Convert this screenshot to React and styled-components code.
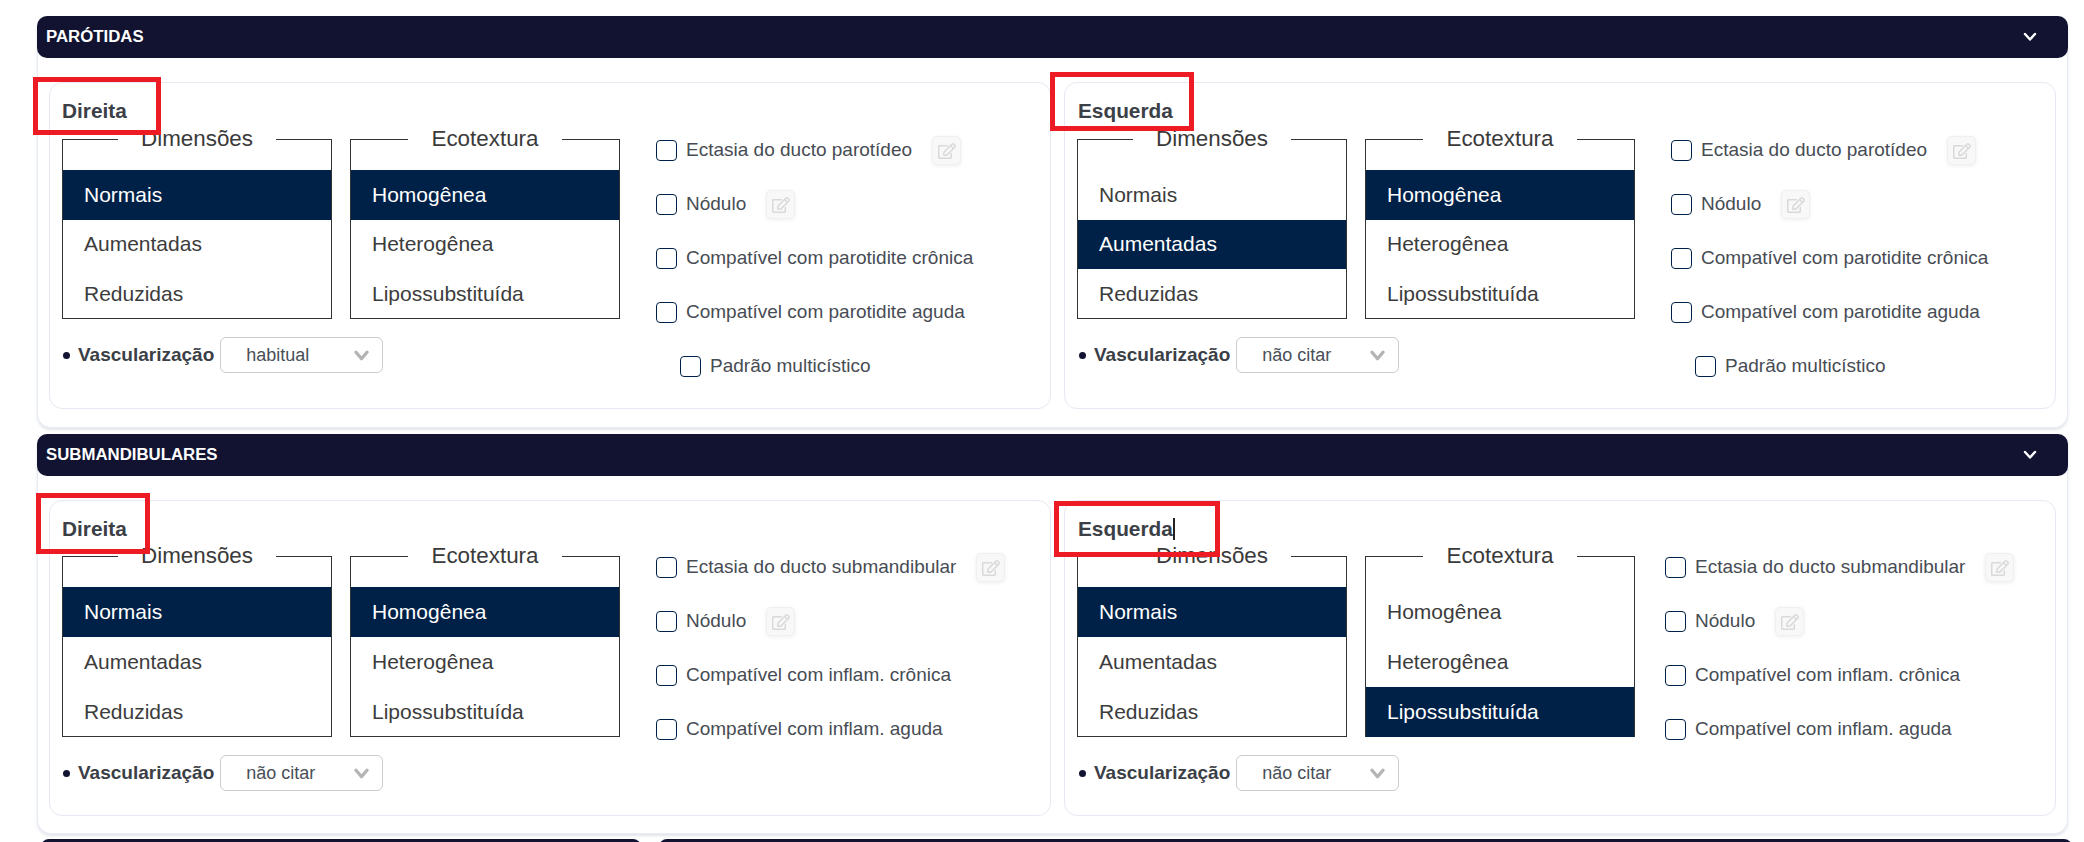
import React from 'react';
import styled, { createGlobalStyle } from 'styled-components';
import { FaRegEdit } from 'react-icons/fa';

const GlobalStyle = createGlobalStyle`
  html, body {
    margin: 0;
    background: #fff;
    overflow: hidden;
  }
  * {
    box-sizing: border-box;
  }
`;

const Page = styled.div`
  position: relative;
  width: 2084px;
  height: 842px;
  overflow: hidden;
  padding: 16px 16px 0 37px;
  font-family: "Liberation Sans", Arial, sans-serif;
`;

// bloco com cabecalho escuro
const Section = styled.section`
  margin-bottom: ${props => props.$after}px;
  background: #fff;
  border: 1px solid #e9ecf4;
  border-top: 0;
  border-radius: 10px 10px 14px 14px;
  box-shadow: 0 2px 3px rgba(120, 130, 160, 0.22);
`;

const SectionHeader = styled.div`
  display: flex;
  align-items: center;
  justify-content: space-between;
  height: 42px;
  margin: 0 -1px;
  padding: 0 31px 0 9px;
  background: #111331;
  border-radius: 10px;
  color: #fff;
  font-size: 16.8px;
  font-weight: 700;
`;

const Chevron = styled.svg`
  display: block;
  width: 14px;
  height: 10px;
  fill: none;
  stroke: ${props => props.$color || '#fff'};
  stroke-width: ${props => props.$weight || 2.4};
  stroke-linecap: round;
  stroke-linejoin: round;
`;

const SectionBody = styled.div`
  display: grid;
  grid-template-columns: 1002fr 992fr;
  gap: 13px;
  padding: 24px 11px ${props => props.$bottom}px 11px;
`;

const Panel = styled.div`
  padding: 16px 12px ${props => (props.$dense ? 24 : 25)}px;
  background: #fff;
  border: 1px solid #e6e9f1;
  border-radius: 13px;
`;

const PanelTitle = styled.div`
  height: ${props => (props.$dense ? 26 : 27)}px;
  margin-left: ${props => props.$shift}px;
  line-height: 23px;
  font-size: 20.8px;
  font-weight: 700;
  color: #3b4047;
`;

const Caret = styled.span`
  display: inline-block;
  width: 2px;
  height: 22px;
  margin-right: -2px;
  background: #222;
  vertical-align: -4px;
`;

const PanelContent = styled.div`
  display: flex;
  align-items: flex-start;
`;

const LeftColumn = styled.div`
  flex: none;
  width: 558px;
`;

const ListBoxes = styled.div`
  display: grid;
  grid-template-columns: 270px 270px;
  gap: 18px;
`;

const ListBox = styled.fieldset`
  margin: 0;
  padding: 18px 0 0;
  height: ${props => (props.$dense ? 194 : 193)}px;
  min-width: 0;
  border: 1px solid #333;
  border-radius: 0;
`;

const ListTitle = styled.legend`
  margin: 0 auto;
  padding: 0 23px;
  line-height: 26px;
  font-size: 22.4px;
  color: #3a3a3a;
`;

const ListOption = styled.div`
  display: flex;
  align-items: center;
  height: ${props => (props.$dense ? 50 : 49.5)}px;
  padding-left: 21px;
  font-size: 21px;
  background: ${props => (props.$selected ? '#002147' : 'transparent')};
  color: ${props => (props.$selected ? '#fff' : '#3c3c3c')};
`;

const VascRow = styled.div`
  display: flex;
  align-items: center;
  margin-top: 18px;
  margin-left: ${props => props.$shift}px;
`;

const Bullet = styled.span`
  flex: none;
  width: 7px;
  height: 7px;
  margin: 0 8px 0 1px;
  border-radius: 50%;
  background: #111331;
`;

const VascLabel = styled.span`
  font-size: 19px;
  font-weight: 700;
  color: #3b4047;
  margin-right: 6px;
`;

const SelectBox = styled.div`
  display: flex;
  align-items: center;
  justify-content: space-between;
  width: 163px;
  height: 36px;
  padding: 0 12px 0 25px;
  background: #fff;
  border: 1px solid #ccc;
  border-radius: 6px;
  font-size: 18px;
  color: #495057;
`;

const CheckList = styled.div`
  flex: none;
  display: flex;
  flex-direction: column;
  gap: 25px;
  margin-left: ${props => props.$offset || 36}px;
  padding: 10px 0 2px;
`;

const CheckRow = styled.label`
  display: flex;
  align-items: center;
  height: 29px;
  margin-left: ${props => (props.$nested ? 24 : 0)}px;
`;

const CheckBox = styled.span`
  flex: none;
  width: 21px;
  height: 21px;
  margin-right: 9px;
  background: #fff;
  border: 1.4px solid #002147;
  border-radius: 4px;
`;

const CheckText = styled.span`
  font-size: 19px;
  line-height: 24px;
  margin-top: -2px;
  color: #474c54;
  white-space: nowrap;
`;

const EditButton = styled.span`
  flex: none;
  display: flex;
  align-items: center;
  justify-content: center;
  width: 29px;
  height: 29px;
  margin-left: 20px;
  background: #f8f8f8;
  border: 1px solid #f0f0f0;
  border-radius: 5px;
  box-shadow: 0 1px 4px rgba(0, 0, 0, 0.07);
  color: #d9d9d9;
  font-size: 18px;
`;

const BottomBars = styled.div`
  display: grid;
  grid-template-columns: 600px 1fr;
  gap: 18px;
  margin: 0 -4px 0 4px;
`;

const BottomBar = styled.div`
  height: 42px;
  background: #111331;
  border-radius: 8px;
`;

// marcacoes vermelhas por cima do print
const RedMark = styled.div`
  position: absolute;
  left: ${props => props.$x}px;
  top: ${props => props.$y}px;
  width: ${props => props.$w}px;
  height: ${props => props.$h}px;
  border: 5px solid #ed1c24;
  pointer-events: none;
`;

const Check = ({ label, nested, edit }) => (
  <CheckRow $nested={nested}>
    <CheckBox />
    <CheckText>{label}</CheckText>
    {edit && (
      <EditButton>
        <FaRegEdit />
      </EditButton>
    )}
  </CheckRow>
);

const List = ({ title, options, selected, dense }) => (
  <ListBox $dense={dense}>
    <ListTitle>{title}</ListTitle>
    {options.map(option => (
      <ListOption key={option} $dense={dense} $selected={option === selected}>
        {option}
      </ListOption>
    ))}
  </ListBox>
);

const Side = ({ title, caret, dimension, texture, vascular, checks, offset, shift = 0, dense }) => (
  <Panel $dense={dense}>
    <PanelTitle $dense={dense} $shift={shift}>
      {title}
      {caret && <Caret />}
    </PanelTitle>
    <PanelContent>
      <LeftColumn>
        <ListBoxes>
          <List title="Dimensões" options={['Normais', 'Aumentadas', 'Reduzidas']} selected={dimension} dense={dense} />
          <List title="Ecotextura" options={['Homogênea', 'Heterogênea', 'Lipossubstituída']} selected={texture} dense={dense} />
        </ListBoxes>
        <VascRow $shift={shift}>
          <Bullet />
          <VascLabel>Vascularização</VascLabel>
          <SelectBox>
            {vascular}
            <Chevron viewBox="0 0 14 10" $color="#b4b4b4" $weight={3} style={{ width: 17, height: 11 }}>
              <polyline points="2,2 7,8 12,2" />
            </Chevron>
          </SelectBox>
        </VascRow>
      </LeftColumn>
      <CheckList $offset={offset}>
        {checks.map(check => (
          <Check key={check.label} {...check} />
        ))}
      </CheckList>
    </PanelContent>
  </Panel>
);

const parotidChecks = [
  { label: 'Ectasia do ducto parotídeo', edit: true },
  { label: 'Nódulo', edit: true },
  { label: 'Compatível com parotidite crônica' },
  { label: 'Compatível com parotidite aguda' },
  { label: 'Padrão multicístico', nested: true },
];

const submandibularChecks = [
  { label: 'Ectasia do ducto submandibular', edit: true },
  { label: 'Nódulo', edit: true },
  { label: 'Compatível com inflam. crônica' },
  { label: 'Compatível com inflam. aguda' },
];

const Block = ({ title, after, bottom, children }) => (
  <Section $after={after}>
    <SectionHeader>
      {title}
      <Chevron viewBox="0 0 14 10">
        <polyline points="2,2 7,7.5 12,2" />
      </Chevron>
    </SectionHeader>
    <SectionBody $bottom={bottom}>{children}</SectionBody>
  </Section>
);

export default function App() {
  return (
    <Page>
      <GlobalStyle />
      <Block title="PARÓTIDAS" after={6} bottom={18}>
        <Side title="Direita" dimension="Normais" texture="Homogênea" vascular="habitual" checks={parotidChecks} />
        <Side title="Esquerda" shift={1} dimension="Aumentadas" texture="Homogênea" vascular="não citar" checks={parotidChecks} />
      </Block>
      <Block title="SUBMANDIBULARES" after={5} bottom={17}>
        <Side title="Direita" dense dimension="Normais" texture="Homogênea" vascular="não citar" checks={submandibularChecks} />
        <Side title="Esquerda" dense shift={1} caret dimension="Normais" texture="Lipossubstituída" vascular="não citar" checks={submandibularChecks} offset={30} />
      </Block>
      <BottomBars>
        <BottomBar />
        <BottomBar />
      </BottomBars>
      <RedMark $x={33} $y={77} $w={128} $h={58} />
      <RedMark $x={1050} $y={72} $w={144} $h={59} />
      <RedMark $x={36} $y={493} $w={114} $h={61} />
      <RedMark $x={1054} $y={501} $w={166} $h={56} />
    </Page>
  );
}
